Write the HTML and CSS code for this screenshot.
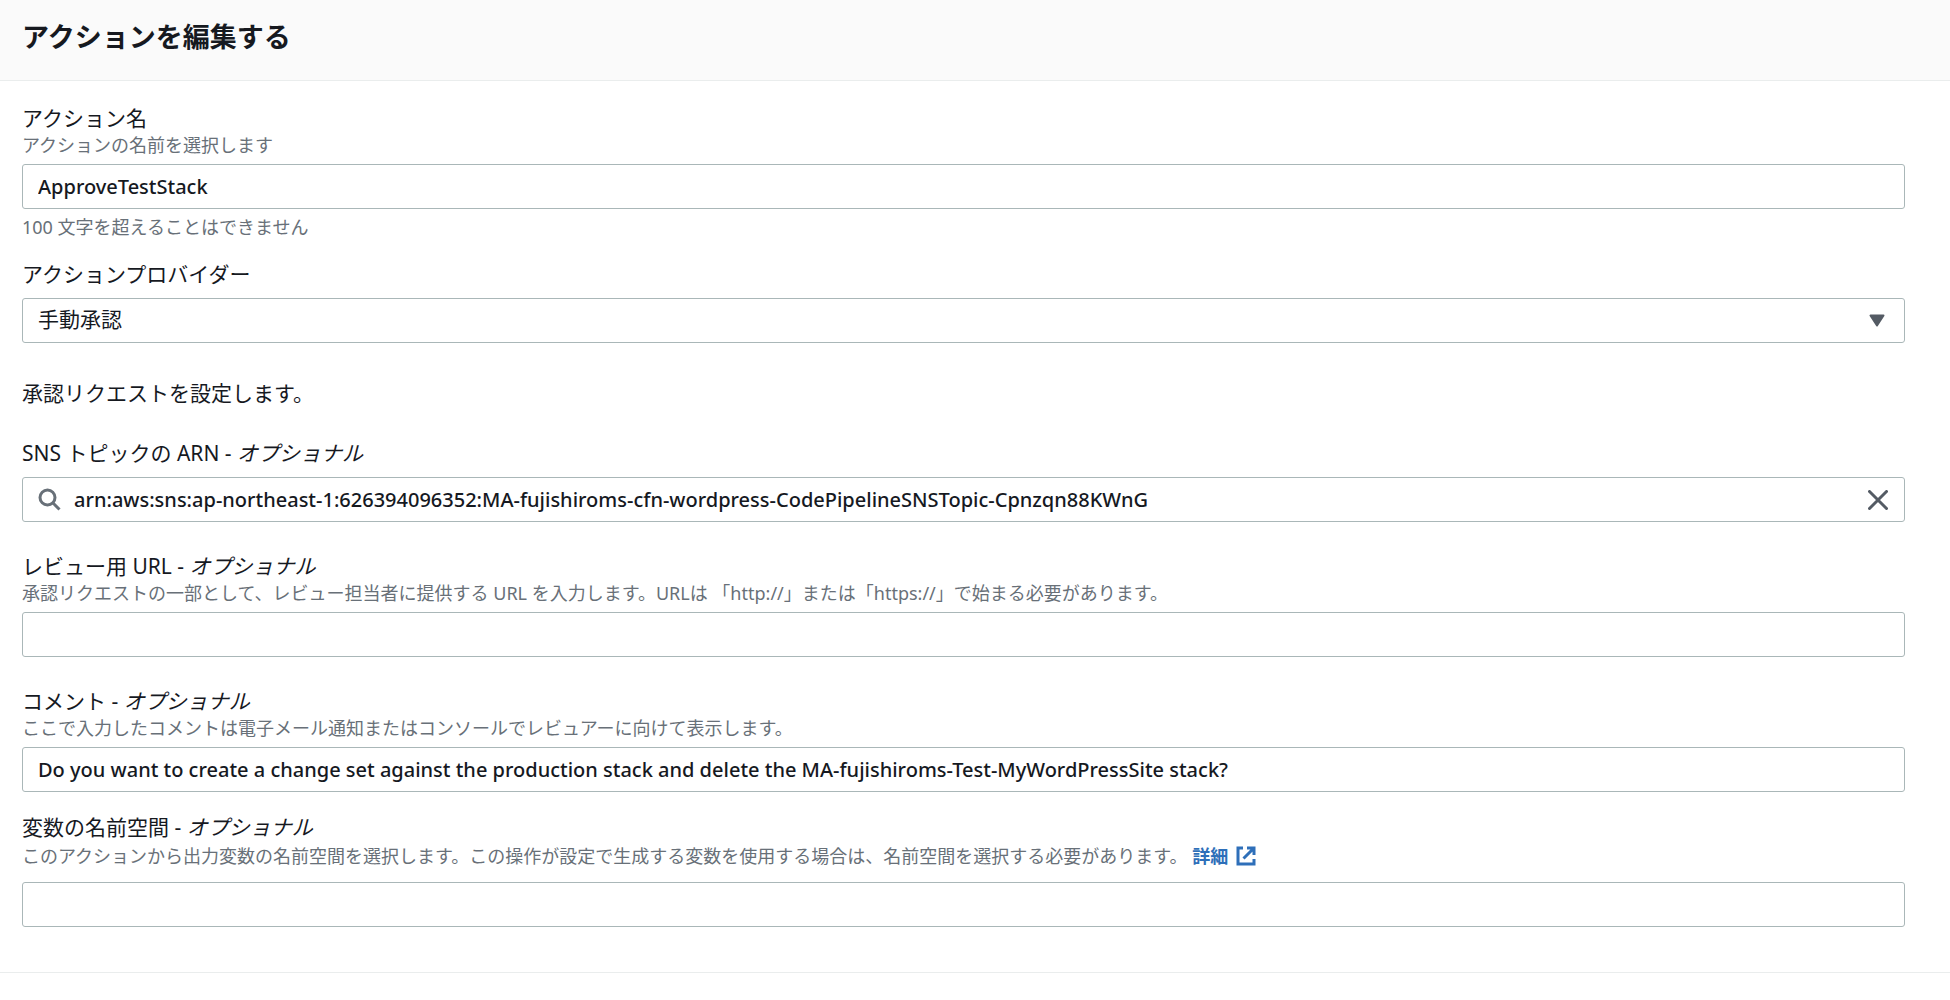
FILE: index.html
```html
<!DOCTYPE html>
<html lang="ja">
<head>
<meta charset="utf-8">
<meta name="viewport" content="width=device-width, initial-scale=1">
<title>アクションを編集する</title>
<link rel="stylesheet" href="styles.css">
</head>
<body>
<header class="header">
  <h1 class="title">アクションを編集する</h1>
</header>
<main>
  <form class="form">
    <div class="field">
      <label class="label" for="action-name">アクション名</label>
      <p class="hint">アクションの名前を選択します</p>
      <input class="control" id="action-name" type="text" value="ApproveTestStack">
      <p class="constraint">100 文字を超えることはできません</p>
    </div>
    <div class="field field-tight">
      <label class="label label-only" for="provider">アクションプロバイダー</label>
      <div class="select-box">
        <select class="control select" id="provider">
          <option>手動承認</option>
        </select>
        <svg class="caret" viewBox="0 0 16 13" aria-hidden="true"><path d="M1.5 1.5h13L8 11.5z" /></svg>
      </div>
    </div>
    <p class="intro">承認リクエストを設定します。</p>
    <div class="field">
      <label class="label label-only" for="sns">SNS トピックの ARN - <em>オプショナル</em></label>
      <div class="control search-box">
        <svg class="search-icon" viewBox="0 0 24 24" aria-hidden="true"><circle cx="9.500" cy="9.500" r="7.500" /><path d="M15 15L21.500 21.500" /></svg>
        <input class="search-input" id="sns" type="text" value="arn:aws:sns:ap-northeast-1:626394096352:MA-fujishiroms-cfn-wordpress-CodePipelineSNSTopic-Cpnzqn88KWnG">
        <button class="clear" type="button" aria-label="クリア">
          <svg class="clear-icon" viewBox="0 0 20 20" aria-hidden="true"><path d="M1.500 1.500l17 17M18.500 1.500l-17 17" /></svg>
        </button>
      </div>
    </div>
    <div class="field field-loose">
      <label class="label" for="review-url">レビュー用 URL - <em>オプショナル</em></label>
      <p class="hint">承認リクエストの一部として、レビュー担当者に提供する URL を入力します。URLは 「http://」または「https://」で始まる必要があります。</p>
      <input class="control" id="review-url" type="text">
    </div>
    <div class="field field-loose">
      <label class="label" for="comment">コメント - <em>オプショナル</em></label>
      <p class="hint">ここで入力したコメントは電子メール通知またはコンソールでレビュアーに向けて表示します。</p>
      <input class="control" id="comment" type="text" value="Do you want to create a change set against the production stack and delete the MA-fujishiroms-Test-MyWordPressSite stack?">
    </div>
    <div class="field field-medium">
      <label class="label" for="namespace">変数の名前空間 - <em>オプショナル</em></label>
      <p class="hint hint-tall">このアクションから出力変数の名前空間を選択します。この操作が設定で生成する変数を使用する場合は、名前空間を選択する必要があります。 <a class="link" href="#">詳細<svg class="link-icon" viewBox="0 0 20 20" aria-hidden="true"><path d="M7 2H2v16h16v-5M11 2h7v7M18 2L7.500 12.500" /></svg></a></p>
      <input class="control" id="namespace" type="text">
    </div>
  </form>
</main>
</body>
</html>
```
FILE: styles.css
```css
* {
  box-sizing: border-box;
}

body {
  margin: 0;
  background: #fff;
  color: #16191f;
  font-family: "Noto Sans", "Noto Sans CJK JP", sans-serif;
  font-size: 21px;
  line-height: 27px;
}

h1,
p {
  margin: 0;
}

.header {
  padding: 19px 22px 25px;
  background: #fafafa;
  border-bottom: 1px solid #eaeded;
}

.title {
  font-size: 27px;
  line-height: 36px;
  font-weight: 700;
}

.form {
  padding: 24px 45px 45px 22px;
  border-bottom: 1px solid #eaeded;
}

.field {
  display: flex;
  flex-direction: column;
}

.field-tight {
  margin-top: 20px;
}

.field-medium {
  margin-top: 22px;
}

.field-loose {
  margin-top: 31px;
}

.label-only {
  margin-bottom: 10px;
}

.hint,
.constraint {
  color: #687078;
  font-size: 18px;
}

.hint {
  margin-bottom: 5px;
}

.hint-tall {
  line-height: 31px;
  margin-bottom: 10px;
}

.constraint {
  margin-top: 5px;
}

.intro {
  margin: 37px 0 33px;
}

.control {
  width: 100%;
  height: 45px;
  padding: 0 15px;
  border: 1px solid #aab7b8;
  border-radius: 3px;
  background: #fff;
  color: #16191f;
  font: 500 20px/27px "Noto Sans", "Noto Sans CJK JP", sans-serif;
}

.select-box {
  position: relative;
}

.select {
  display: block;
  appearance: none;
  padding-bottom: 2px;
  font-size: 21px;
  font-weight: 400;
}

.caret {
  position: absolute;
  top: 16px;
  right: 20px;
  width: 16px;
  height: 13px;
  fill: #545b64;
  stroke: #545b64;
  stroke-width: 2;
  stroke-linejoin: round;
  pointer-events: none;
}

.search-box {
  display: flex;
  align-items: center;
  gap: 12px;
}

.search-icon {
  flex: none;
  width: 24px;
  height: 24px;
  fill: none;
  stroke: #687078;
  stroke-width: 3;
}

.search-input {
  flex: 1;
  min-width: 0;
  padding: 0;
  border: 0;
  outline: 0;
  background: none;
  color: inherit;
  font: inherit;
}

.clear {
  display: flex;
  padding: 0 1px 0 0;
  border: 0;
  background: none;
  cursor: pointer;
}

.clear-icon {
  width: 20px;
  height: 20px;
  fill: none;
  stroke: #545b64;
  stroke-width: 3;
  stroke-linecap: round;
}

.link {
  color: #2e6fb9;
  font-weight: 700;
  text-decoration: none;
}

.link-icon {
  width: 20px;
  height: 20px;
  margin-left: 8px;
  vertical-align: -3px;
  fill: none;
  stroke: currentColor;
  stroke-width: 3;
}
```
